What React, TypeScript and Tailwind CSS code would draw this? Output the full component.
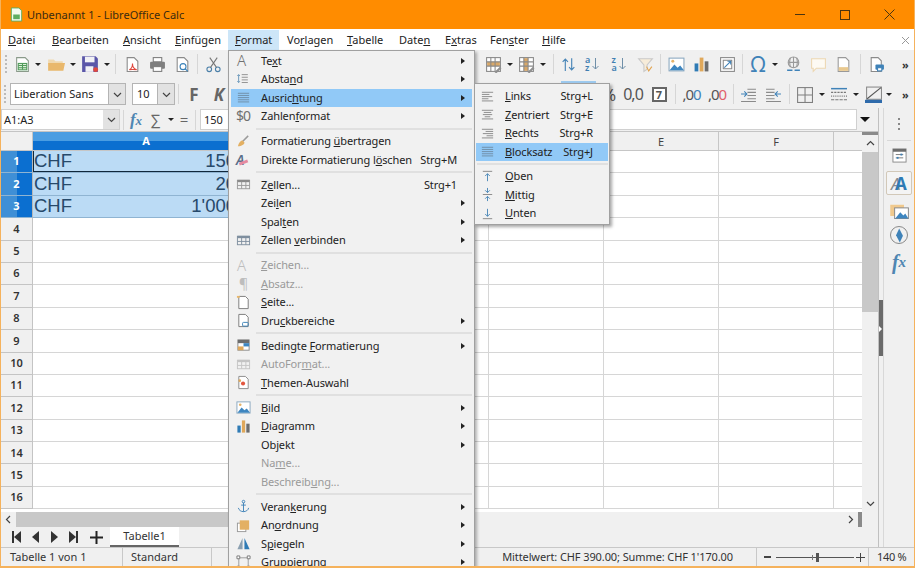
import React from "react";

type P = { children?: React.ReactNode; className?: string };

const Svg = ({ s = 16, children }: { s?: number; children: React.ReactNode }) => (
  <svg width={s} height={s} viewBox="0 0 16 16" fill="none" className="shrink-0">{children}</svg>
);
const Slot = ({ className = "", children }: P) => (
  <div className={`flex h-full shrink-0 items-center justify-center ${className}`}>{children}</div>
);
const Tri = () => <div className="h-0 w-0 border-x-[3px] border-t-[3px] border-x-transparent border-t-[#222]" />;
const Arrow = () => <div className="h-0 w-0 border-y-[3px] border-l-[4px] border-y-transparent border-l-[#222]" />;
const Sep = () => <div className="h-[20px] w-px bg-[#d6d6d6]" />;
const Chev = ({ d }: { d: string }) => (
  <svg width="9" height="9" viewBox="0 0 9 9" fill="none" stroke="#444" strokeWidth="1.2"><path d={d} /></svg>
);
const More = () => <span className="text-[11px] font-bold leading-none text-[#333]">»</span>;

/* alignment icons */
const Lines = ({ kind, c = "#8a8a8a" }: { kind: "l" | "c" | "r" | "j"; c?: string }) => {
  const rows: [number, number][] =
    kind === "l" ? [[2, 14], [2, 10], [2, 13], [2, 9], [2, 14]] :
    kind === "c" ? [[2, 14], [4, 12], [3, 13], [5, 11], [2, 14]] :
    kind === "r" ? [[2, 14], [6, 14], [3, 14], [7, 14], [2, 14]] :
    [[2, 14], [2, 14], [2, 14], [2, 14], [2, 14]];
  return (
    <Svg s={15}>
      {rows.map(([a, b], i) => (
        <line key={i} x1={a} x2={b} y1={3.5 + i * 2.3} y2={3.5 + i * 2.3} stroke={c} strokeWidth="1" />
      ))}
    </Svg>
  );
};
const VAlign = ({ k }: { k: "t" | "m" | "b" }) => (
  <Svg s={15}>
    {k === "t" && <><line x1="3" x2="13" y1="2.5" y2="2.5" stroke="#888" /><path d="M8 13V5M5.5 7.5 8 5l2.5 2.5" stroke="#4b87b8" /></>}
    {k === "m" && <><line x1="3" x2="13" y1="8" y2="8" stroke="#888" /><path d="M8 1v5M5.5 3.5 8 6l2.5-2.5M8 15v-5M5.5 12.5 8 10l2.5 2.5" stroke="#4b87b8" /></>}
    {k === "b" && <><line x1="3" x2="13" y1="13.5" y2="13.5" stroke="#888" /><path d="M8 3v8M5.5 8.5 8 11l2.5-2.5" stroke="#4b87b8" /></>}
  </Svg>
);

const TableIc = ({ c = "#8a8a8a", head = "#8a8a8a" }: { c?: string; head?: string }) => (
  <Svg s={15}>
    <rect x="1.5" y="3.5" width="13" height="9" stroke={c} />
    <rect x="1.5" y="3" width="13" height="2.5" fill={head} />
    <path d="M1.5 9h13M6 5v7.5M10.5 5v7.5" stroke={c} />
  </Svg>
);
const NewCalc = () => (
  <Svg s={17}>
    <path d="M2.5 1.5h8l3 3v10h-11z" fill="#fff" stroke="#8a9a8a" />
    <rect x="4" y="7" width="8" height="6" fill="#dff0da" stroke="#4f9a5a" />
    <path d="M4 9h8M4 11h8M8 7v6" stroke="#4f9a5a" />
  </Svg>
);
const Folder = () => (
  <Svg s={18}>
    <path d="M1 4h5l1.5 1.5H14V8H1z" fill="#f0d9b0" />
    <path d="M1 14V7h15l-1.5 7z" fill="#e9b86c" />
  </Svg>
);
const Disk = () => (
  <Svg s={18}>
    <path d="M1 1h12l2 2v12H1z" fill="#5a56a8" />
    <rect x="3.5" y="1.5" width="8.5" height="5" fill="#f1f1f5" />
    <rect x="4" y="10" width="7" height="5" fill="#f1f1f5" />
    <circle cx="13" cy="13" r="2.2" fill="#e0483e" />
  </Svg>
);
const Doc = ({ children }: P) => (
  <Svg s={17}>
    <path d="M3 1.5h6.5l3.5 3.5v9.5H3z" fill="#fff" stroke="#8a8a8a" />
    {children}
  </Svg>
);
const Printer = () => (
  <Svg s={17}>
    <rect x="4" y="1.5" width="8" height="4" fill="#fff" stroke="#7d7d7d" />
    <rect x="1" y="5.5" width="14" height="6.5" rx="1" fill="#7f7f7f" />
    <rect x="4" y="10" width="8" height="4.5" fill="#fff" stroke="#7d7d7d" />
  </Svg>
);
const Scissors = () => (
  <Svg s={17}>
    <circle cx="4" cy="12.5" r="2.2" stroke="#4a7fa8" />
    <circle cx="12" cy="12.5" r="2.2" stroke="#4a7fa8" />
    <path d="M5.2 10.7 11.5 1.5M10.8 10.7 4.5 1.5" stroke="#777" />
  </Svg>
);
const TableEdit = ({ vert }: { vert?: boolean }) => (
  <Svg s={17}>
    <rect x="1.5" y="1.5" width="13" height="13" fill="#fff" stroke="#8a8a8a" />
    {vert ? <rect x="5.5" y="2" width="4" height="12" fill="#d9a868" /> : <rect x="2" y="5.5" width="12" height="4" fill="#d9a868" />}
    <path d="M1.5 5.5h13M1.5 9.5h13M5.5 1.5v13M9.5 1.5v13" stroke="#8a8a8a" />
    <path d="m9 15 5-5 1.5 1.5-5 5z" fill="#8f8f8f" />
  </Svg>
);
const ImageIc = ({ s = 17 }: { s?: number }) => (
  <Svg s={s}>
    <rect x="1" y="2" width="14" height="12" fill="#fff" stroke="#8aa8c0" />
    <path d="M1.5 13.5 6 8l3 3 2.5-2 3.5 4.5z" fill="#3e86c0" />
    <circle cx="4.5" cy="5" r="1.4" fill="#e6b46a" />
  </Svg>
);
const ChartIc = ({ s = 17 }: { s?: number }) => (
  <Svg s={s}>
    <rect x="1.5" y="7" width="3.5" height="7.5" fill="#2f7bb5" />
    <rect x="6.3" y="1.5" width="3.5" height="13" fill="#e0a85a" />
    <rect x="11" y="5" width="3.5" height="9.5" fill="#6d6d6d" />
  </Svg>
);
const Sort = () => (
  <Svg s={17}><path d="M5 14V3M2.5 5.5 5 3l2.5 2.5M11 2v11M8.5 10.5 11 13l2.5-2.5" stroke="#4b87b8" strokeWidth="1.1" /></Svg>
);
const AZ = ({ a, b }: { a: string; b: string }) => (
  <div className="flex h-[18px] w-[17px] items-center">
    <div className="flex flex-col text-[9px] font-semibold leading-[8px] text-[#3f7fb2]"><span>{a}</span><span>{b}</span></div>
    <svg width="9" height="14" viewBox="0 0 9 14" fill="none" className="ml-px"><path d="M4.5 1v11M1.5 9l3 3 3-3" stroke="#6f8fa8" strokeWidth="1" /></svg>
  </div>
);

/* Menu */
const Item = ({
  icon, children, sc, arrow, off, active,
}: { icon?: React.ReactNode; children: React.ReactNode; sc?: string; arrow?: boolean; off?: boolean; active?: boolean }) => (
  <div className={`flex h-[18.5px] items-center ${active ? "bg-[#91c9f7]" : ""} ${off ? "text-[#9a9a9a]" : "text-[#222]"}`}>
    <div className="flex w-[29px] shrink-0 items-center justify-start pl-[5px]">{icon}</div>
    <div className="flex-1 whitespace-nowrap pl-px">{children}</div>
    {sc && <div className="pr-[15px]">{sc}</div>}
    {arrow && <div className="flex w-[11px] shrink-0 justify-start"><Arrow /></div>}
  </div>
);
const MSep = () => (
  <div className="flex h-[6.5px] items-center pl-[25px]"><div className="h-[2px] flex-1 bg-[#e0e0e0]" /></div>
);
const SSep = () => (
  <div className="flex h-[6px] items-center pl-[1px]"><div className="h-[2px] flex-1 bg-[#e0e0e0]" /></div>
);
const SubItem = ({ icon, children, sc, active }: { icon: React.ReactNode; children: React.ReactNode; sc?: string; active?: boolean }) => (
  <div className={`flex h-[18.5px] items-center ${active ? "bg-[#91c9f7]" : ""}`}>
    <div className="flex w-[27px] shrink-0 items-center justify-start pl-[4px]">{icon}</div>
    <div className="flex-1 whitespace-nowrap pl-[2px]">{children}</div>
    {sc && <div className="pr-[15px]">{sc}</div>}
  </div>
);

const GlyphA = ({ off }: { off?: boolean }) => (
  <span className={`pl-[1px] text-[15px] font-light leading-none ${off ? "text-[#bdbdbd]" : "text-[#707070]"}`}>A</span>
);

const FormatMenu = () => (
  <div className="absolute left-[227px] top-[50px] h-[518px] w-[247px] overflow-hidden border border-[#a0a0a0] bg-[#f1f1f1] px-[2px] pt-[0.5px] text-[11px] tracking-[-0.12px] shadow-[2px_2px_3px_rgba(0,0,0,0.3)]">
    <Item icon={<GlyphA />} arrow>Te<u>x</u>t</Item>
    <Item arrow icon={<Svg s={14}><path d="M3 3v9M1.5 4.5 3 3l1.5 1.5M1.5 10.5 3 12l1.5-1.5" stroke="#5f8fb5" /><path d="M6.5 3h7M6.5 6h7M6.5 9h7M6.5 12h7" stroke="#888" /></Svg>}>Absta<u>n</u>d</Item>
    <Item active arrow icon={<Lines kind="j" c="#6f8da6" />}>Ausric<u>h</u>tung</Item>
    <Item arrow icon={<span className="text-[14px] leading-none tracking-[-1px] text-[#707070]">$0</span>}>Zahlen<u>f</u>ormat</Item>
    <MSep />
    <Item icon={<Svg s={15}><path d="M13 2 7 8" stroke="#9a9a9a" strokeWidth="1.6" /><path d="M2 13c1-4 3-6 5-6l2 2c0 2-3 4-7 4z" fill="#e3b063" /></Svg>}>Formatierung <u>ü</u>bertragen</Item>
    <Item sc="Strg+M" icon={<span className="relative text-[14px] font-semibold italic leading-none text-[#5a6f8a]">A<span className="absolute left-[3px] top-[8px] h-[3px] w-[9px] rotate-[-20deg] bg-[#e58aa0]" /></span>}>Direkte Formatierung l<u>ö</u>schen</Item>
    <MSep />
    <Item sc="Strg+1" icon={<TableIc c="#9a9a9a" head="#8a8a8a" />}>Z<u>e</u>llen...</Item>
    <Item arrow>Zei<u>l</u>en</Item>
    <Item arrow>Spal<u>t</u>en</Item>
    <Item arrow icon={<TableIc c="#7f8f9f" head="#7f8f9f" />}>Zellen <u>v</u>erbinden</Item>
    <MSep />
    <Item off icon={<GlyphA off />}><u>Z</u>eichen...</Item>
    <Item off icon={<span className="pl-[3px] text-[14px] leading-none text-[#bdbdbd]">¶</span>}><u>A</u>bsatz...</Item>
    <Item icon={<Svg s={15}><path d="M3 1.5h7l3 3v10H3z" fill="#fff" stroke="#7a7a7a" /><rect x="1" y="1" width="3" height="2" fill="#e9b86c" /></Svg>}><u>S</u>eite...</Item>
    <Item arrow icon={<Svg s={15}><path d="M3 1.5h7l3 3v10H3z" fill="#fff" stroke="#7a7a7a" /><rect x="7" y="10" width="6" height="4" rx="1" stroke="#3b82b8" /></Svg>}>Dru<u>c</u>kbereiche</Item>
    <MSep />
    <Item arrow icon={<Svg s={15}><rect x="2" y="2" width="12" height="11" fill="#fff" stroke="#8a8a8a" /><rect x="2" y="2" width="12" height="3.5" fill="#6d6d6d" /><rect x="2" y="9" width="6" height="4" fill="#e0a85a" /><rect x="8" y="5.5" width="6" height="3.5" fill="#3e86c0" /></Svg>}>Bedingte <u>F</u>ormatierung</Item>
    <Item off icon={<TableIc c="#c4c4c4" head="#c4c4c4" />}>AutoFor<u>m</u>at...</Item>
    <Item icon={<Svg s={15}><path d="M3 1.5h7l3 3v10H3z" fill="#fff" stroke="#8a8a8a" /><circle cx="7.5" cy="9" r="2.2" fill="#e2563f" /><circle cx="4" cy="6" r="1.4" fill="#e0a85a" /></Svg>}><u>T</u>hemen-Auswahl</Item>
    <MSep />
    <Item arrow icon={<ImageIc s={15} />}><u>B</u>ild</Item>
    <Item arrow icon={<ChartIc s={15} />}><u>D</u>iagramm</Item>
    <Item arrow>Ob<u>j</u>ekt</Item>
    <Item off>Na<u>m</u>e...</Item>
    <Item off>Beschreib<u>u</u>ng...</Item>
    <MSep />
    <Item arrow icon={<Svg s={15}><circle cx="8" cy="2.8" r="1.4" stroke="#3f82b8" /><path d="M8 4v9.5M5.5 6.5h5M2.5 9.5c.5 2.5 3 4 5.5 4s5-1.5 5.5-4" stroke="#3f82b8" /></Svg>}>Veran<u>k</u>erung</Item>
    <Item arrow icon={<Svg s={15}><rect x="1.5" y="5.5" width="9" height="9" fill="#fff" stroke="#999" /><rect x="4" y="2.5" width="10" height="10" fill="#e3b063" /></Svg>}>An<u>o</u>rdnung</Item>
    <Item arrow icon={<Svg s={15}><path d="M7 2v12H1.5z" fill="#8a9fb0" /><path d="M9 2v12h5.5z" fill="#2f7bb5" /></Svg>}>S<u>p</u>iegeln</Item>
    <Item arrow icon={<Svg s={15}><rect x="3" y="3" width="10" height="10" stroke="#999" /><path d="M1 1h3v3H1zM12 1h3v3h-3zM1 12h3v3H1zM12 12h3v3h-3z" fill="#fff" stroke="#777" /></Svg>}><u>G</u>ruppierung</Item>
  </div>
);

const SubMenu = () => (
  <div className="absolute left-[473px] top-[83px] h-[142px] w-[136px] border border-[#a0a0a0] bg-[#f1f1f1] px-[1px] pt-[3px] text-[11px] tracking-[-0.12px] text-[#222] shadow-[2px_2px_3px_rgba(0,0,0,0.35)]">
    <SubItem icon={<Lines kind="l" />} sc="Strg+L"><u>L</u>inks</SubItem>
    <SubItem icon={<Lines kind="c" />} sc="Strg+E"><u>Z</u>entriert</SubItem>
    <SubItem icon={<Lines kind="r" />} sc="Strg+R"><u>R</u>echts</SubItem>
    <SubItem active icon={<Lines kind="j" c="#6f8da6" />} sc="Strg+J"><u>B</u>locksatz</SubItem>
    <SSep />
    <SubItem icon={<VAlign k="t" />}><u>O</u>ben</SubItem>
    <SubItem icon={<VAlign k="m" />}><u>M</u>ittig</SubItem>
    <SubItem icon={<VAlign k="b" />}><u>U</u>nten</SubItem>
  </div>
);

/* Grid */
const ROWS = Array.from({ length: 16 }, (_, i) => i + 1);
const VALS: Record<number, string> = { 1: "150", 2: "20", 3: "1'000" };
const COL = "h-full shrink-0 border-r border-b border-[#d6d6d6]";

const Row = ({ n }: { n: number }) => {
  const sel = n <= 3;
  return (
    <div className="flex h-[22.4px] shrink-0">
      {sel ? (
        <div className="relative flex h-full w-[32px] shrink-0 items-center justify-center border-b border-r border-b-[#8fb4d2] border-r-[#b8b8b8] text-[11px] font-bold text-white">
          <div className="h-full w-1/2 bg-[#3f8fd6]" />
          <div className="h-full w-1/2 bg-[#0b6fd0]" />
          <span className="absolute">{n}</span>
        </div>
      ) : (
        <div className="flex h-full w-[32px] shrink-0 items-center justify-center border-b border-r border-[#c4c4c4] bg-[#f0f0f0] text-[11px] font-semibold text-[#333]">{n}</div>
      )}
      <div
        className={`flex h-full w-[226px] shrink-0 items-center justify-between border-b border-r pl-px pr-[22px] font-['Liberation_Sans',sans-serif] text-[18.5px] leading-none text-[#27496a] ${
          sel ? "border-b-[#8fb4d2] border-r-[#8fb4d2] bg-[#bbdbf5]" : "border-[#d6d6d6]"
        } ${n === 1 ? "shadow-[inset_1px_0_0_#10283c,inset_0_-1px_0_#10283c]" : ""}`}
      >
        {sel && <span>CHF</span>}
        {sel && <span>{VALS[n]}</span>}
      </div>
      <div className={`${COL} w-[115px]`} />
      <div className={`${COL} w-[115px]`} />
      <div className={`${COL} w-[115px]`} />
      <div className={`${COL} w-[115px]`} />
      <div className={`${COL} w-[115px]`} />
      <div className="h-full flex-1 border-b border-[#d6d6d6]" />
    </div>
  );
};

const HeadCell = ({ children }: P) => (
  <div className="flex h-full w-[115px] shrink-0 items-center justify-center border-r border-[#c6c6c6] text-[11px] leading-none text-[#444]">{children}</div>
);

export default function App() {
  return (
    <div className="relative flex h-[568px] w-[915px] flex-col overflow-hidden border-x border-b-2 border-x-[#f5b25c] border-b-[#f5b25c] bg-[#f0f0f0] font-['Noto_Sans',sans-serif] text-[11px] text-[#222]">
      {/* Title */}
      <div className="-mx-px flex h-[29px] shrink-0 items-center bg-[#ff8c00] pl-[9px] pr-[3px] text-[11px] text-[#3a2a10]">
        <Svg s={15}>
          <path d="M2.5 1h8l3 3v11h-11z" fill="#f4fbef" stroke="#5fae62" />
          <rect x="4.5" y="8" width="7" height="5" fill="#5fae62" />
        </Svg>
        <span className="ml-[3px] pt-px">Unbenannt 1 - LibreOffice Calc</span>
        <div className="ml-auto flex h-full items-center text-[#3a2a10]">
          <div className="flex w-[45px] justify-center"><div className="h-px w-[10px] bg-[#4a3410]" /></div>
          <div className="flex w-[45px] justify-center"><div className="h-[10px] w-[10px] border border-[#4a3410]" /></div>
          <div className="flex w-[45px] justify-center">
            <svg width="11" height="11" viewBox="0 0 11 11" stroke="#4a3410"><path d="M.5.5l10 10M10.5.5l-10 10" /></svg>
          </div>
        </div>
      </div>

      {/* Menu bar */}
      <div className="flex h-[21px] shrink-0 items-center bg-white pt-px text-[11px] text-[#222]">
        <div className="w-[43px] pl-[7px]"><u>D</u>atei</div>
        <div className="w-[71px] pl-[8px]"><u>B</u>earbeiten</div>
        <div className="w-[52px] pl-[8px]"><u>A</u>nsicht</div>
        <div className="w-[61px] pl-[8px]"><u>E</u>infügen</div>
        <div className="flex h-[20px] w-[51px] items-center self-end bg-[#cde6f8] pl-[7px]"><u>F</u>ormat</div>
        <div className="w-[60px] pl-[8px]">Vo<u>r</u>lagen</div>
        <div className="w-[52px] pl-[8px]"><u>T</u>abelle</div>
        <div className="w-[46px] pl-[8px]">Date<u>n</u></div>
        <div className="w-[45px] pl-[8px]">E<u>x</u>tras</div>
        <div className="w-[52px] pl-[8px]">Fen<u>s</u>ter</div>
        <div className="pl-[8px]"><u>H</u>ilfe</div>
        <div className="ml-auto pr-[4px]">
          <svg width="9" height="9" viewBox="0 0 9 9" stroke="#999"><path d="M1 1l7 7M8 1 1 8" /></svg>
        </div>
      </div>

      {/* Toolbar 1 */}
      <div className="flex h-[29px] shrink-0 items-center pb-px">
        <div className="flex h-full w-[483px] shrink-0 items-center">
          <Slot className="w-[10px]"><div className="h-[18px] w-[3px] border-l-2 border-dotted border-[#bbb]" /></Slot>
          <Slot className="w-[22px]"><NewCalc /></Slot>
          <Slot className="w-[10px]"><Tri /></Slot>
          <Slot className="w-[26px]"><Folder /></Slot>
          <Slot className="w-[8px]"><Tri /></Slot>
          <Slot className="w-[26px]"><Disk /></Slot>
          <Slot className="w-[8px]"><Tri /></Slot>
          <Slot className="w-[8px]"><Sep /></Slot>
          <Slot className="w-[26px]"><Doc><path d="M5 13c2-1 3-4 3-6 0 3 1 5 4 6-3-.5-5-.5-7 0z" stroke="#e0483e" /></Doc></Slot>
          <Slot className="w-[24px]"><Printer /></Slot>
          <Slot className="w-[26px]"><Doc><circle cx="8.5" cy="10" r="2.8" stroke="#3b82b8" /><path d="m10.5 12 2.5 2.5" stroke="#3b82b8" /></Doc></Slot>
          <Slot className="w-[4px]"><Sep /></Slot>
          <Slot className="w-[28px]"><Scissors /></Slot>
        </div>
        <Slot className="w-[18px]"><TableEdit /></Slot>
        <Slot className="w-[16px]"><Tri /></Slot>
        <Slot className="w-[16px]"><TableEdit vert /></Slot>
        <Slot className="w-[18px]"><Tri /></Slot>
        <Slot className="w-[2px]"><Sep /></Slot>
        <Slot className="w-[28px]"><Sort /></Slot>
        <Slot className="w-[23px]"><AZ a="a" b="z" /></Slot>
        <Slot className="w-[30px]"><AZ a="z" b="a" /></Slot>
        <Slot className="w-[20px]"><Svg s={17}><path d="M1.5 2.5h13L9.5 8.5v4l-3 2v-6z" fill="#f7ecd9" stroke="#c9c9c9" /><path d="M9 10l2 4 3-4" stroke="#e3a44f" /></Svg></Slot>
        <Slot className="w-[10px]"><Sep /></Slot>
        <Slot className="w-[22px]"><ImageIc /></Slot>
        <Slot className="w-[28px]"><ChartIc /></Slot>
        <Slot className="w-[24px]"><Svg s={17}><rect x="1.5" y="1.5" width="13" height="13" fill="#fff" stroke="#8a8a8a" /><rect x="4" y="4" width="8" height="8" stroke="#8a8a8a" /><path d="M5 11 11 5M8 5h3v3" stroke="#3f82b8" /></Svg></Slot>
        <Slot className="w-[6px]"><Sep /></Slot>
        <Slot className="w-[26px]"><span className="text-[21px] leading-none text-[#3f82b8]">Ω</span></Slot>
        <Slot className="w-[8px]"><Tri /></Slot>
        <Slot className="w-[28px]"><Svg s={17}><circle cx="8" cy="6" r="5" stroke="#9a9a9a" /><path d="M3 6h10M8 1v10M5 1.5c-1 3-1 6 0 9M11 1.5c1 3 1 6 0 9" stroke="#9a9a9a" /><path d="M2 13.5h5M9 13.5h5" stroke="#3f82b8" strokeWidth="1.4" /></Svg></Slot>
        <Slot className="w-[22px]"><Svg s={17}><path d="M1.5 2.5h13v9H6l-3 3v-3H1.5z" fill="#fdfaf3" stroke="#ecd7b2" /></Svg></Slot>
        <Slot className="w-[28px]"><Svg s={17}><path d="M3 1.5h7l3 3v10H3z" fill="#fff" stroke="#999" /><rect x="3.5" y="10.5" width="9" height="3.5" fill="#e9c98f" /></Svg></Slot>
        <Slot className="w-[6px]"><Sep /></Slot>
        <Slot className="w-[26px]"><Svg s={17}><path d="M3 1.5h6.5l3 3v10H3z" fill="#fff" stroke="#8a8a8a" /><rect x="7" y="8" width="8" height="5" rx="1" fill="#3f82b8" /><rect x="9" y="11" width="4" height="3" fill="#fff" stroke="#3f82b8" /></Svg></Slot>
        <Slot className="ml-auto w-[17px]"><More /></Slot>
      </div>

      {/* Toolbar 2 */}
      <div className="flex h-[29px] shrink-0 items-center pt-px">
        <div className="flex h-full w-[599px] shrink-0 items-center">
          <Slot className="w-[9px]"><div className="h-[18px] w-[3px] border-l-2 border-dotted border-[#bbb]" /></Slot>
          <div className="flex h-[22px] w-[116px] shrink-0 items-center border border-[#b4b4b4] bg-white pl-[3px] text-[#222]">
            <span className="flex-1 whitespace-nowrap pt-px">Liberation Sans</span>
            <div className="flex h-full w-[17px] items-center justify-center border-l border-[#b4b4b4] bg-[#e2e2e2]"><Chev d="M1 3l3.5 3.5L8 3" /></div>
          </div>
          <div className="ml-[6px] flex h-[22px] w-[43px] shrink-0 items-center border border-[#b4b4b4] bg-white pl-[4px]">
            <span className="flex-1 pt-px">10</span>
            <div className="flex h-full w-[17px] items-center justify-center border-l border-[#b4b4b4] bg-[#e2e2e2]"><Chev d="M1 3l3.5 3.5L8 3" /></div>
          </div>
          <Slot className="w-[6px]"><Sep /></Slot>
          <Slot className="w-[26px]"><span className="text-[17px] font-bold leading-none text-[#666]">F</span></Slot>
          <Slot className="w-[24px]"><span className="text-[17px] font-bold italic leading-none text-[#666]">K</span></Slot>
        </div>
        <Slot className="w-[18px]"><span className="text-[17px] leading-none text-[#555]">%</span></Slot>
        <Slot className="w-[30px]"><span className="text-[16px] leading-none tracking-[-1px] text-[#555]">0,0</span></Slot>
        <Slot className="w-[22px]"><div className="flex h-[15px] w-[15px] items-center justify-center border-2 border-[#666] bg-white text-[11px] font-bold leading-none text-[#555]">7</div></Slot>
        <Slot className="w-[10px]"><Sep /></Slot>
        <Slot className="w-[23px]"><span className="text-[15px] leading-none tracking-[-1px] text-[#555]">,0<span className="text-[#3f82b8]">0</span></span></Slot>
        <Slot className="w-[28px]"><span className="text-[15px] leading-none tracking-[-1px] text-[#555]">,0<span className="text-[#e0606a]">0</span></span></Slot>
        <Slot className="w-[4px]"><Sep /></Slot>
        <Slot className="w-[26px]"><Svg s={17}><path d="M7 3h8M7 6h8M7 9h8M7 12h8M1 14.5h14" stroke="#8a8a8a" /><path d="M1 7.5h5M4 5l2.5 2.5L4 10" stroke="#3f82b8" /></Svg></Slot>
        <Slot className="w-[24px]"><Svg s={17}><path d="M1 3h8M1 6h8M1 9h8M1 12h8M1 14.5h14" stroke="#8a8a8a" /><path d="M15 7.5h-5M12 5 9.5 7.5 12 10" stroke="#3f82b8" /></Svg></Slot>
        <Slot className="w-[8px]"><Sep /></Slot>
        <Slot className="w-[22px]"><Svg s={17}><rect x="1.5" y="1.5" width="14" height="14" stroke="#7f7f7f" /><path d="M8.5 1.5v14M1.5 8.5h14" stroke="#7f7f7f" /></Svg></Slot>
        <Slot className="w-[14px]"><Tri /></Slot>
        <Slot className="w-[18px]"><Svg s={17}><path d="M1 2.5h15" stroke="#3f82b8" strokeWidth="1.4" /><path d="M1 6h15" stroke="#777" strokeDasharray="2 1" /><path d="M1 9.5h15" stroke="#777" strokeDasharray="1 1" /><path d="M1 13h15" stroke="#777" strokeDasharray="3 1" /></Svg></Slot>
        <Slot className="w-[18px]"><Tri /></Slot>
        <Slot className="w-[16px]"><Svg s={17}><rect x="1.5" y="1" width="14" height="11.5" stroke="#8a8a8a" /><path d="M2 12 15 1.5" stroke="#555" /><rect x="0" y="13" width="17" height="3.5" fill="#2f6bab" /></Svg></Slot>
        <Slot className="w-[16px]"><Tri /></Slot>
        <Slot className="ml-auto w-[17px]"><More /></Slot>
      </div>

      {/* Body */}
      <div className="flex min-h-0 flex-1">
        <div className="flex w-[877px] shrink-0 flex-col">
          {/* Formula bar */}
          <div className="flex h-[24px] shrink-0 items-center border-b border-[#c4c4c4]">
            <div className="flex h-[21px] w-[119px] shrink-0 items-center border border-[#d0d0d0] bg-white pl-[2px]">
              <span className="flex-1 pt-px">A1:A3</span>
              <div className="flex h-full w-[16px] items-center justify-center bg-[#e2e2e2]"><Chev d="M1 3l3.5 3.5L8 3" /></div>
            </div>
            <Slot className="w-[6px]"><Sep /></Slot>
            <Slot className="w-[20px]"><span className="font-['Liberation_Serif',serif] text-[17px] font-bold italic leading-none text-[#4f86b2]">f<span className="text-[13px]">x</span></span></Slot>
            <Slot className="w-[19px]"><span className="text-[15px] leading-none text-[#666]">∑</span></Slot>
            <Slot className="w-[12px]"><Tri /></Slot>
            <Slot className="w-[14px]"><span className="text-[15px] leading-none text-[#666]">=</span></Slot>
            <Slot className="w-[9px]"><Sep /></Slot>
            <div className="flex h-[21px] w-[657px] shrink-0 items-center border border-[#d0d0d0] bg-white pl-[3px] pt-px">150</div>
            <Slot className="flex-1 justify-start pl-[3px]"><div className="h-0 w-0 border-x-[5px] border-t-[5px] border-x-transparent border-t-[#111]" /></Slot>
          </div>

          {/* Grid and vertical bar */}
          <div className="flex min-h-0 flex-1">
            <div className="flex min-w-0 flex-1 flex-col overflow-hidden bg-white">
              <div className="flex h-[19px] shrink-0 border-b border-[#c6c6c6] bg-[#f0f0f0]">
                <div className="w-[32px] shrink-0 border-r border-[#c6c6c6]" />
                <div className="relative flex h-full w-[226px] shrink-0 flex-col text-[11px] font-bold text-white">
                  <div className="h-[9px] bg-[#4a9de2]" />
                  <div className="flex-1 bg-[#0b6fd0]" />
                  <span className="absolute inset-0 flex items-center justify-center">A</span>
                </div>
                <HeadCell>B</HeadCell>
                <HeadCell>C</HeadCell>
                <HeadCell>D</HeadCell>
                <HeadCell>E</HeadCell>
                <HeadCell>F</HeadCell>
                <div className="flex-1" />
              </div>
              {ROWS.map((n) => <Row key={n} n={n} />)}
            </div>
            <div className="flex w-[16px] shrink-0 flex-col items-center bg-[#f0f0f0]">
              <div className="h-[3px] w-full bg-[#8a8a8a]" />
              <div className="flex h-[17px] items-center justify-center"><Chev d="M1 6l3.5-3.5L8 6" /></div>
              <div className="h-[160px] w-full bg-[#c8c8c8]" />
              <div className="flex-1" />
              <div className="flex h-[17px] items-center justify-center"><Chev d="M1 3l3.5 3.5L8 3" /></div>
            </div>
          </div>

          {/* Horizontal bar */}
          <div className="flex h-[15px] shrink-0 items-center bg-[#f0f0f0]">
            <div className="flex w-[15px] shrink-0 justify-center"><Chev d="M6 1 2.5 4.5 6 8" /></div>
            <div className="h-full w-[280px] bg-[#c8c8c8]" />
            <div className="flex-1" />
            <div className="flex w-[16px] justify-center"><Chev d="M3 1l3.5 3.5L3 8" /></div>
            <div className="mr-[16px] h-full w-[4px] bg-[#8a8a8a]" />
          </div>

          {/* Tabs */}
          <div className="flex h-[20px] shrink-0 items-center">
            <Slot className="ml-[5px] w-[20px]"><div className="flex items-center"><div className="h-[12px] w-[2px] bg-[#333]" /><div className="h-0 w-0 border-y-[6px] border-r-[7px] border-y-transparent border-r-[#333]" /></div></Slot>
            <Slot className="w-[19px]"><div className="h-0 w-0 border-y-[6px] border-r-[7px] border-y-transparent border-r-[#333]" /></Slot>
            <Slot className="w-[18px]"><div className="h-0 w-0 border-y-[6px] border-l-[7px] border-y-transparent border-l-[#333]" /></Slot>
            <Slot className="w-[20px]"><div className="flex items-center"><div className="h-0 w-0 border-y-[6px] border-l-[7px] border-y-transparent border-l-[#333]" /><div className="h-[12px] w-[2px] bg-[#333]" /></div></Slot>
            <Slot className="w-[26px]"><svg width="13" height="13" viewBox="0 0 13 13" stroke="#222" strokeWidth="2"><path d="M6.5 0v13M0 6.5h13" /></svg></Slot>
            <div className="ml-[1px] flex h-full w-[69px] shrink-0 items-center justify-center border-b-2 border-[#666] bg-white pt-px text-[#333]">Tabelle1</div>
          </div>
        </div>

        {/* Sidebar strip */}
        <div className="flex w-[5px] shrink-0 flex-col border-l border-[#c0c0c0] bg-[#f0f0f0]">
          <div className="h-[192px]" />
          <div className="relative h-[56px] bg-[#6a6a6a]">
            <div className="absolute left-0 top-[26px] h-0 w-0 border-y-[3px] border-l-[3px] border-y-transparent border-l-white" />
          </div>
        </div>
        {/* Sidebar */}
        <div className="flex flex-1 flex-col items-center border-l border-[#d8d8d8] bg-[#f0f0f0]">
          <div className="mt-[9px] flex h-[14px] flex-col justify-between py-[1px]">
            <div className="h-[2px] w-[2px] bg-[#888]" />
            <div className="h-[2px] w-[2px] bg-[#888]" />
            <div className="h-[2px] w-[2px] bg-[#888]" />
          </div>
          <div className="mt-[9px] h-px w-[24px] bg-[#d8d8d8]" />
          <div className="mt-[7px] flex h-[15px] items-center">
            <Svg s={15}><rect x="1" y="1" width="14" height="14" fill="#fff" stroke="#8a8a8a" /><rect x="1" y="1" width="14" height="3" fill="#6d6d6d" /><path d="M4 7h8M4 10.5h8" stroke="#777" /><rect x="9" y="6" width="2" height="2" fill="#3f82b8" /><rect x="5" y="9.5" width="2" height="2" fill="#3f82b8" /></Svg>
          </div>
          <div className="relative mt-[8px] flex h-[24px] w-[26px] items-center justify-center rounded-[2px] border border-[#d2c8b8] bg-[#f4f4f4]">
            <span className="absolute left-[4px] text-[17px] italic leading-none text-[#8a8a8a]">A</span>
            <span className="absolute left-[8px] text-[17px] font-bold leading-none text-[#2f7bb5]">A</span>
          </div>
          <div className="mt-[6px] flex h-[20px] items-center">
            <Svg s={20}>
              <rect x="1" y="3" width="11" height="9" fill="#f0c98d" />
              <rect x="4.5" y="5.5" width="11" height="8.5" fill="#fff" stroke="#8a8a8a" strokeWidth="0.8" />
              <path d="M5 14 9 9l2.5 2.5L13 10l2.5 4z" fill="#3e86c0" />
            </Svg>
          </div>
          <div className="mt-[5px] flex h-[18px] w-[18px] items-center justify-center rounded-full border border-[#8a8a8a]">
            <div className="h-[7px] w-[7px] rotate-45 skew-x-[20deg] skew-y-[20deg] bg-[#3f82b8]" />
          </div>
          <div className="mt-[8px] flex h-[20px] items-center font-['Liberation_Serif',serif] text-[20px] font-bold italic leading-none text-[#4f86b2]">f<span className="text-[15px]">x</span></div>
        </div>
      </div>

      {/* Status bar */}
      <div className="flex h-[19px] shrink-0 items-center border-t border-[#c8c8c8] text-[#333]">
        <div className="flex h-full w-[122px] shrink-0 items-center border-r border-[#c8c8c8] pl-[9px]">Tabelle 1 von 1</div>
        <div className="flex h-full w-[89px] shrink-0 items-center border-r border-[#c8c8c8] pl-[8px]">Standard</div>
        <div className="flex-1" />
        <div className="flex h-full w-[280px] shrink-0 items-center justify-end whitespace-nowrap border-r border-[#c8c8c8] pr-[23px] tracking-[-0.1px]">Mittelwert: CHF 390.00; Summe: CHF 1'170.00</div>
        <div className="flex h-full w-[112px] shrink-0 items-center border-r border-[#c8c8c8] pl-[7px]">
          <div className="h-[2px] w-[7px] bg-[#444]" />
          <div className="relative ml-[5px] h-px w-[78px] bg-[#555]">
            <div className="absolute left-[40px] top-[-4px] h-[9px] w-[3px] bg-[#555]" />
            <div className="absolute left-[36px] top-[-2px] h-[5px] w-px bg-[#777]" />
          </div>
          <div className="relative ml-[2px] h-[9px] w-[9px]">
            <div className="absolute left-0 top-[4px] h-px w-[9px] bg-[#444]" />
            <div className="absolute left-[4px] top-0 h-[9px] w-px bg-[#444]" />
          </div>
        </div>
        <div className="w-[45px] shrink-0 whitespace-nowrap pl-[8px] tracking-[-0.3px]">140 %</div>
      </div>

      <FormatMenu />
      <div className="absolute left-[560px] top-[81px] h-[2px] w-[35px] bg-[#9ecbf0]" />
      <SubMenu />
    </div>
  );
}
